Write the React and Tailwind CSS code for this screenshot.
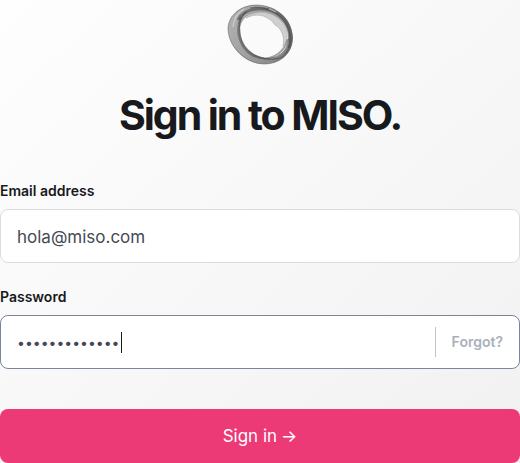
import { useState } from "react";

function Logo() {
  return (
    <svg viewBox="0 0 68 64" className="h-16 w-[68px]" fill="none" aria-label="MISO" role="img">
      <defs>
        <linearGradient id="ring" x1="0" y1="0.3" x2="1" y2="0.7">
          <stop offset="0" stopColor="#b0b0b0" />
          <stop offset="0.5" stopColor="#9c9c9c" />
          <stop offset="1" stopColor="#808080" />
        </linearGradient>
      </defs>
      <path
        fillRule="evenodd"
        fill="url(#ring)"
        d="M2 27C3 13 16 3 31 4C51 4 66 18 67 36C67 53 54 63 38 63C18 63 2 45 2 27ZM14 28C13 42 23 54 38 57C52 58 63 50 62 34C61 22 51 13 36 12C24 11 15 17 14 28Z"
      />
      <path
        fill="#cfcfcf"
        stroke="#b5b5b5"
        strokeWidth="0.8"
        d="M20 17C29 9 44 10 53 18C62 26 64 37 57 45C59 37 56 29 51 25C47 24 47 19 43 18C36 13 28 13 20 17Z"
      />
      <path stroke="#4a4a4a" strokeOpacity=".6" strokeWidth="3" d="M12 19C20 5 39 6 51 12C63 19 68 34 63 47" />
      <path stroke="#444" strokeOpacity=".5" strokeWidth="2" d="M15 16C9 29 13 46 26 54C41 62 57 55 62 38" />
      <path stroke="#444" strokeOpacity=".55" strokeWidth="1.2" d="M20 11C9 22 12 44 28 54C42 60 57 61 63 48M24 7C38 4 56 12 62 27C65 36 65 46 59 53" />
      <path stroke="#666" strokeOpacity=".7" strokeWidth="0.8" d="M2 27C3 13 16 4 31 4C51 5 65 18 66 36C67 52 54 63 38 63C18 62 2 45 2 27M14 28C13 42 23 54 38 57" />
      <path stroke="#e5e5e5" strokeOpacity=".6" strokeWidth="1.2" d="M7 26C8 17 12 11 18 8M43 8L50 11" />
    </svg>
  );
}

export default function App() {
  const [email, setEmail] = useState("hola@miso.com");
  const [password, setPassword] = useState("misopassword1");
  return (
    <main className="bg-linear-to-br from-[#fefefe] to-[#f1f1f1] font-[Inter,sans-serif] text-[#17191c]">
      <header className="flex flex-col items-center gap-5 pt-px">
        <Logo />
        <h1 className="text-[41px] leading-[60px] font-bold tracking-tighter">Sign in to MISO.</h1>
      </header>
      <form className="flex flex-col pt-9" onSubmit={(e) => e.preventDefault()}>
        <label htmlFor="email" className="pb-2 text-sm leading-5 font-semibold">Email address</label>
        <input
          id="email"
          type="email"
          value={email}
          onChange={(e) => setEmail(e.target.value)}
          className="h-[54px] w-full rounded-lg border border-[#dcdcdc] bg-white px-4 pt-0.5 text-[17px] text-[#444a53] outline-none"
        />
        <label htmlFor="password" className="pt-6 pb-2 text-sm leading-5 font-semibold">Password</label>
        <div className="relative flex h-[54px] items-center rounded-lg border border-[#7b8799] bg-white">
          <input
            id="password"
            type="password"
            value={password}
            onChange={(e) => setPassword(e.target.value)}
            className="h-full min-w-0 flex-1 bg-transparent px-4 text-sm text-[#444a53] outline-none"
          />
          <span className="pointer-events-none absolute left-[120px] h-[21px] w-px bg-[#16181d]" />
          <div className="flex h-[30px] items-center border-l border-[#bfc5cc] px-4">
            <a href="#forgot" className="text-sm font-semibold text-[#a9b0bb]">Forgot?</a>
          </div>
        </div>
        <button type="submit" className="mt-10 flex h-[54px] items-center justify-center gap-1 rounded-lg bg-[#ec3a76] pt-0.5 text-[17px] text-white">
          Sign in <span>→</span>
        </button>
      </form>
    </main>
  );
}
